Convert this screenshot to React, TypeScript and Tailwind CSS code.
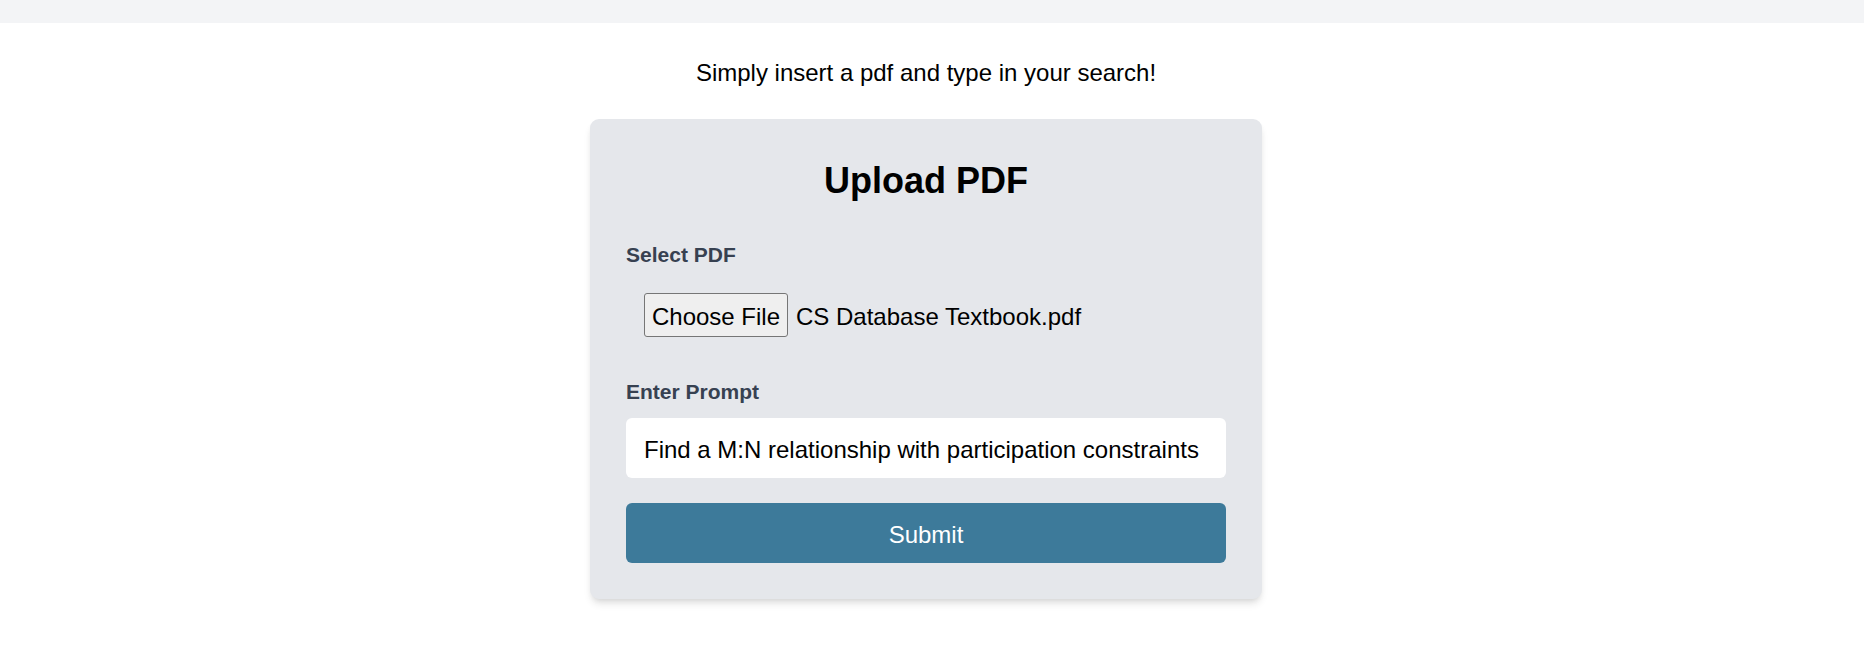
import { FC } from "react";

const App: FC = () => {
    return (
        <div className="min-h-screen bg-white font-['Liberation_Sans',Arial,sans-serif] text-black">
            {/* Top bar */}
            <div className="h-[23px] bg-[#f3f4f6]" />

            <div className="pr-3">
                <p className="mt-8 text-center text-[24px] leading-[36px]">
                    Simply insert a pdf and type in your search!
                </p>

                {/* Upload card */}
                <div className="mx-auto mt-7 w-[672px] rounded-[9px] bg-[#e5e7eb] p-9 shadow-[0_6px_9px_-2px_rgba(0,0,0,0.12),0_3px_6px_-3px_rgba(0,0,0,0.1)]">
                    <h1 className="mb-9 pt-[4px] text-center text-[36px] font-bold leading-[44px]">
                        Upload PDF
                    </h1>

                    <label className="mb-3 block pt-[2px] text-[21px] font-bold leading-[28px] text-[#374151]">
                        Select PDF
                    </label>
                    <div className="mb-[27px] flex items-center px-[18px] py-3">
                        <button className="h-[44px] w-[144px] rounded-[3px] border border-[#767676] bg-[#efefef] pt-[3px] text-[24px] leading-[36px] text-black">
                            Choose File
                        </button>
                        <span className="ml-2 pt-[3px] text-[24px] leading-[36px]">CS Database Textbook.pdf</span>
                    </div>

                    <label className="mb-3 block pt-[2px] text-[21px] font-bold leading-[28px] text-[#374151]">
                        Enter Prompt
                    </label>
                    <input
                        type="text"
                        readOnly
                        value="Find a M:N relationship with participation constraints"
                        className="block w-full rounded-[6px] bg-white px-[18px] pt-[14px] pb-[10px] text-[24px] leading-[36px] text-black outline-none"
                    />

                    <button className="mt-[25px] block w-full rounded-[6px] bg-[#3d7a9a] pt-[14px] pb-[10px] text-[24px] leading-[36px] text-white">
                        Submit
                    </button>
                </div>
            </div>
        </div>
    );
};

export default App;
